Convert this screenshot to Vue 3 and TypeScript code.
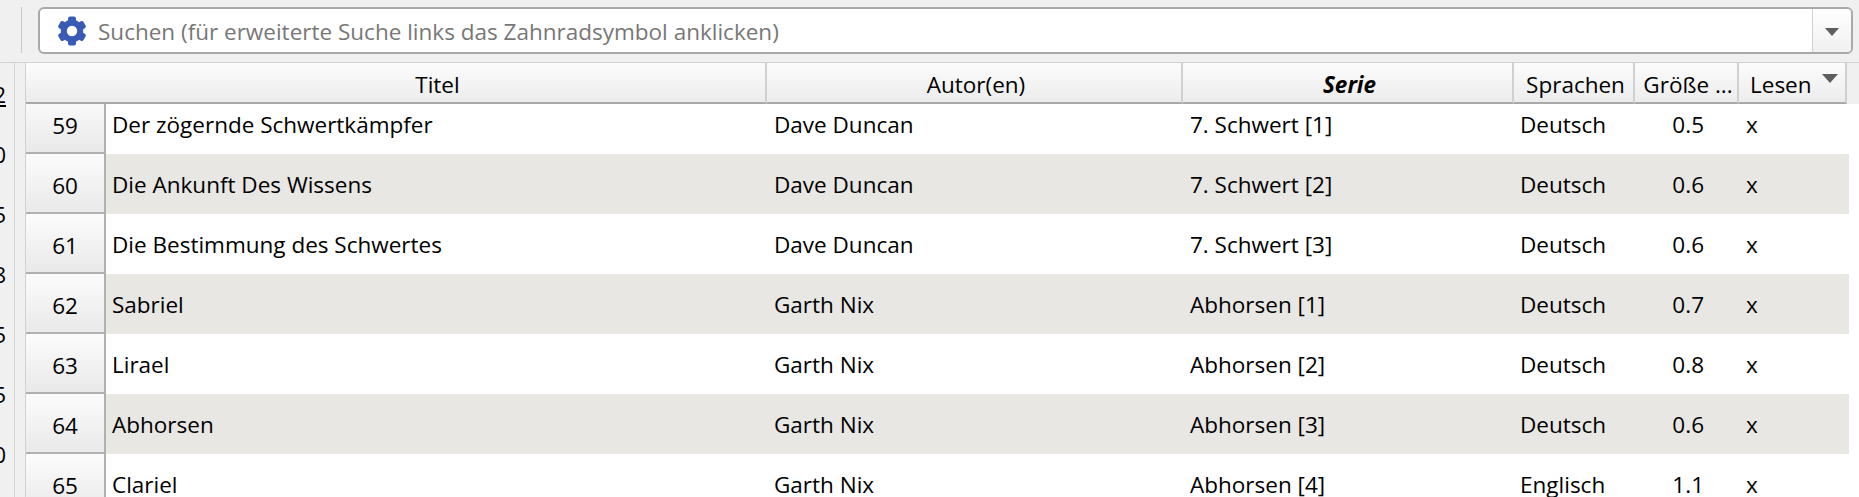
<script setup lang="ts">
interface Book { id: number; title: string; author: string; series: string; lang: string; size: string; read: string }
const books: Book[] = [
  { id: 59, title: 'Der zögernde Schwertkämpfer', author: 'Dave Duncan', series: '7. Schwert [1]', lang: 'Deutsch', size: '0.5', read: 'x' },
  { id: 60, title: 'Die Ankunft Des Wissens', author: 'Dave Duncan', series: '7. Schwert [2]', lang: 'Deutsch', size: '0.6', read: 'x' },
  { id: 61, title: 'Die Bestimmung des Schwertes', author: 'Dave Duncan', series: '7. Schwert [3]', lang: 'Deutsch', size: '0.6', read: 'x' },
  { id: 62, title: 'Sabriel', author: 'Garth Nix', series: 'Abhorsen [1]', lang: 'Deutsch', size: '0.7', read: 'x' },
  { id: 63, title: 'Lirael', author: 'Garth Nix', series: 'Abhorsen [2]', lang: 'Deutsch', size: '0.8', read: 'x' },
  { id: 64, title: 'Abhorsen', author: 'Garth Nix', series: 'Abhorsen [3]', lang: 'Deutsch', size: '0.6', read: 'x' },
  { id: 65, title: 'Clariel', author: 'Garth Nix', series: 'Abhorsen [4]', lang: 'Englisch', size: '1.1', read: 'x' },
]
const sideDigits = ['2', '0', '5', '8', '5', '5', '0']
const teeth = [0, 60, 120, 180, 240, 300]
</script>

<template>
  <div class="app">
    <div class="topbar">
      <div class="splitter"></div>
      <div class="search">
        <svg class="gear" viewBox="0 0 30 30" width="30" height="30">
          <g fill="#3a5bb5">
            <rect v-for="a in teeth" :key="a" x="11" y="0.5" width="8" height="8" rx="2" :transform="`rotate(${a} 15 15)`" />
          </g>
          <circle cx="15" cy="15" r="8.2" fill="none" stroke="#3a5bb5" stroke-width="6" />
        </svg>
        <span class="placeholder">Suchen (für erweiterte Suche links das Zahnradsymbol anklicken)</span>
        <div class="drop"><i class="tri"></i></div>
      </div>
    </div>
    <div class="main">
      <div class="side">
        <div v-for="(d, i) in sideDigits" :key="i" class="sd"><span :class="{ u: i === 0 }">{{ d }}</span></div>
      </div>
      <div class="table">
        <div class="head">
          <div class="corner"></div>
          <div class="hc c-title">Titel</div>
          <div class="hc c-author">Autor(en)</div>
          <div class="hc c-series sorted">Serie</div>
          <div class="hc c-lang">Sprachen</div>
          <div class="hc c-size">Größe ...</div>
          <div class="hc c-read">Lesen<i class="tri sort"></i></div>
        </div>
        <div class="body">
          <div class="rows">
            <div v-for="(b, i) in books" :key="b.id" class="row">
              <div class="rh">{{ b.id }}</div>
              <div class="cells" :class="{ alt: i % 2 === 1 }">
                <div class="td c-title">{{ b.title }}</div>
                <div class="td c-author">{{ b.author }}</div>
                <div class="td c-series">{{ b.series }}</div>
                <div class="td c-lang">{{ b.lang }}</div>
                <div class="td c-size num">{{ b.size }}</div>
                <div class="td c-read">{{ b.read }}</div>
              </div>
            </div>
          </div>
        </div>
      </div>
    </div>
  </div>
</template>

<style>
html, body { margin: 0; background: #f0f0f0; overflow: hidden; }
</style>

<style scoped>
.app {
  width: 1859px;
  height: 497px;
  overflow: hidden;
  background: #f0f0f0;
  font-family: "Open Sans", "Noto Sans", sans-serif;
  font-size: 22.5px;
  color: #000;
}
.topbar { height: 62px; display: flex; padding: 7px 6px 0 21px; box-sizing: border-box; }
.splitter { width: 1px; height: 46px; background: #c8c8c8; margin-right: 16px; }
.search {
  flex: 1;
  height: 47px;
  box-sizing: border-box;
  border: 2px solid #a9a9a9;
  border-radius: 6px;
  background: #fff;
  display: flex;
  align-items: center;
  padding-left: 17px;
}
.gear { flex: none; margin-right: 11px; }
.placeholder { color: #777; flex: 1; white-space: nowrap; padding-top: 2px; }
.drop {
  width: 39px;
  height: 100%;
  box-sizing: border-box;
  border-left: 1px solid #d0d0d0;
  background: linear-gradient(#fff, #f0f0f0);
  border-radius: 0 4px 4px 0;
  display: flex;
  align-items: center;
  justify-content: center;
  padding-top: 2px;
}
.tri { width: 0; height: 0; border-left: 7px solid transparent; border-right: 7px solid transparent; border-top: 8px solid #5e5e5e; display: block; }
.main { display: flex; height: 435px; border-top: 1px solid #d2d2d2; }
.side { width: 15px; height: 435px; box-sizing: border-box; border-right: 1px solid #d4d4d4; overflow: hidden; flex: none; padding-top: 2px; padding-right: 8px; margin-right: 10px; }
.sd { height: 60px; display: flex; justify-content: flex-end; line-height: 60px; }
.sd span { display: block; flex: none; }
.sd .u { text-decoration: underline; }
.table { flex: 1; overflow: hidden; border-left: 1px solid #d2d2d2; background: #fff; }
.head { display: flex; height: 41px; box-sizing: border-box; background: #f0f0f0; width: 100%; }
.corner { width: 80px; flex: none; background: linear-gradient(#fcfcfc, #ececec); border-bottom: 2px solid #a9a9a9; box-sizing: border-box; }
.hc { text-align: center; line-height: 43px; box-sizing: border-box; padding-left: 4px; background: linear-gradient(#fcfcfc, #ececec); border-right: 2px solid #d0d0d0; border-bottom: 2px solid #a9a9a9; white-space: nowrap; position: relative; flex: none; }
.sorted { font-weight: 700; font-style: italic; }
.body { height: 393px; overflow: hidden; }
.rows { margin-top: -10px; }
.row { display: flex; height: 60px; }
.rh { width: 80px; flex: none; box-sizing: border-box; text-align: center; line-height: 63px; background: linear-gradient(#fcfcfc, #e9e9e9); border-right: 2px solid #b0b0b0; border-bottom: 2px solid #b0b0b0; }
.cells { width: 1743px; flex: none; display: flex; background: #fff; }
.cells.alt { background: #e8e7e3; }
.td { box-sizing: border-box; line-height: 62px; white-space: nowrap; padding-left: 7px; overflow: hidden; }
.td.c-title, .td.c-lang { padding-left: 6px; }
.c-title { width: 661px; }
.c-author { width: 416px; }
.c-series { width: 331px; }
.c-lang { width: 121px; }
.c-size { width: 104px; }
.c-read { width: 108px; }
.num { text-align: right; padding-right: 35px; padding-left: 0; }
.hc.c-read { text-align: left; padding-left: 11px; }
.sort { position: absolute; right: 7px; top: 11px; border-left-width: 8px; border-right-width: 8px; border-top-width: 9px; }
</style>
